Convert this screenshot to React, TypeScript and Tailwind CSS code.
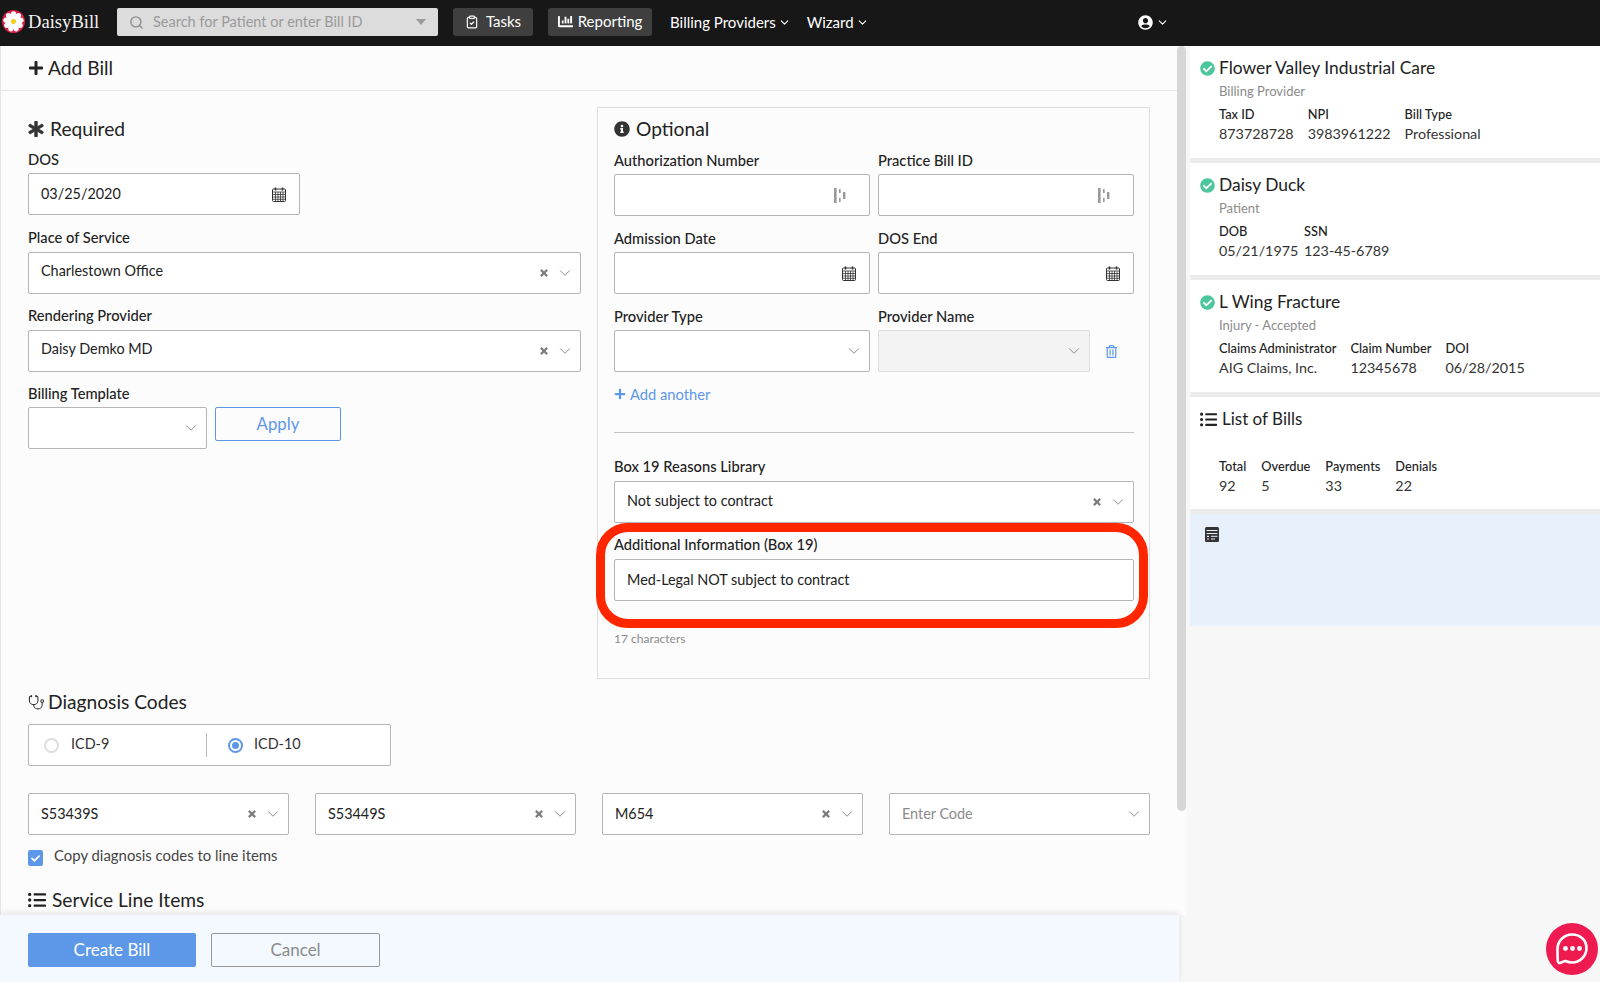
import React from "react";
import { ChevronDown, ClipboardCheck, Search, Stethoscope } from "lucide-react";
import {
  FaAsterisk,
  FaChartBar,
  FaCheck,
  FaCheckCircle,
  FaInfoCircle,
  FaListUl,
  FaPlus,
  FaRegTrashAlt,
  FaTimes,
  FaUserCircle,
} from "react-icons/fa";

function DaisyLogo() {
  const petals = [0, 40, 80, 120, 160, 200, 240, 280, 320];
  return (
    <svg width="23" height="23" viewBox="0 0 24 24" className="shrink-0">
      <circle cx="12" cy="12" r="12" fill="#d81f45" />
      {petals.map((a) => (
        <ellipse key={a} cx="12" cy="5.6" rx="3" ry="4.4" fill="#fff" transform={`rotate(${a} 12 12)`} />
      ))}
      <circle cx="12" cy="12" r="2.6" fill="#f7d117" />
    </svg>
  );
}

function CalendarIcon() {
  return (
    <svg width="14" height="15" viewBox="0 0 14 15" className="shrink-0" fill="none" stroke="#333">
      <rect x="0.5" y="2" width="13" height="12.5" rx="1" />
      <path d="M0.5 5h13M0.5 7.5h13M0.5 10h13M0.5 12.3h13M3.5 5v9.5M6 5v9.5M8.5 5v9.5M11 5v9.5" strokeWidth="0.8" />
      <path d="M3.5 0.5v3M10.5 0.5v3" strokeWidth="1.6" />
    </svg>
  );
}

function PassIcon() {
  return (
    <svg width="12" height="15" viewBox="0 0 12 15" className="shrink-0" fill="#999">
      <rect x="0" y="0" width="2.6" height="15" />
      <rect x="5" y="1" width="1.6" height="4" />
      <rect x="5" y="10" width="1.6" height="4" />
      <rect x="9" y="4" width="2.4" height="7" />
    </svg>
  );
}

function DetailsIcon() {
  return (
    <svg width="14" height="15" viewBox="0 0 14 15" className="shrink-0">
      <rect width="14" height="15" rx="1.5" fill="#333" />
      <path d="M1.5 3.5h11M1.5 6.5h11M6 9.3h6.5M6 12h4" stroke="#e8f0fb" strokeWidth="1" />
      <path d="M2 9.3h2M2 12h2" stroke="#e8f0fb" strokeWidth="1.2" />
    </svg>
  );
}

function ChatIcon() {
  return (
    <svg width="34" height="34" viewBox="0 0 34 34" fill="none">
      <path
        d="M17 2.5C9 2.5 2.5 9 2.5 17c0 2.8.1 9 .3 12 .1 1.6 1.2 2.4 2.7 1.8 2-.8 3.6-1.8 5.2-1.8 2 .9 4 1.5 6.3 1.5 8 0 14.5-6.5 14.5-14.5S25 2.5 17 2.5Z"
        stroke="#fff"
        strokeWidth="2.6"
      />
      <circle cx="10.5" cy="16.5" r="2.4" fill="#fff" />
      <circle cx="17.5" cy="16.5" r="2.4" fill="#fff" />
      <circle cx="24.5" cy="16.5" r="2.4" fill="#fff" />
    </svg>
  );
}

function Chevron() {
  return <ChevronDown size={18} strokeWidth={1.3} className="shrink-0 text-[#8a8a8a]" />;
}

function Clear() {
  return <FaTimes size={10} stroke="currentColor" strokeWidth={30} className="shrink-0 text-[#777]" />;
}

function Box({
  children,
  disabled,
  className = "",
}: {
  children?: React.ReactNode;
  disabled?: boolean;
  className?: string;
}) {
  return (
    <div
      className={`flex h-[42px] items-center rounded-[2px] border pl-3 text-[14.4px] text-[#222] ${
        disabled ? "border-[#dcdcdc] bg-[#f3f3f3]" : "border-[#b5b5b5] bg-white"
      } ${className}`}
    >
      {children}
    </div>
  );
}

function Select({
  value,
  clearable,
  disabled,
  textClass = "",
}: {
  value?: string;
  clearable?: boolean;
  disabled?: boolean;
  textClass?: string;
}) {
  return (
    <Box disabled={disabled} className="pr-[6px]">
      <span className={`flex-1 truncate ${textClass}`}>{value}</span>
      {clearable && (
        <span className="mr-[7px]">
          <Clear />
        </span>
      )}
      <Chevron />
    </Box>
  );
}

function Label({ children }: { children: React.ReactNode }) {
  return <div className="h-5 text-[14.7px] font-medium leading-[18px] text-[#222]">{children}</div>;
}

function Field({
  label,
  children,
  className = "",
  gap = "mt-[4px]",
}: {
  label: string;
  children: React.ReactNode;
  className?: string;
  gap?: string;
}) {
  return (
    <div className={className}>
      <Label>{label}</Label>
      <div className={gap}>{children}</div>
    </div>
  );
}

function Heading({ icon, children, className = "" }: { icon: React.ReactNode; children: React.ReactNode; className?: string }) {
  return (
    <div className={`flex h-7 items-center gap-[6px] text-[19.2px] text-[#222] ${className}`}>
      {icon}
      <span>{children}</span>
    </div>
  );
}

function Stat({ label, value, width = "" }: { label: string; value: string; width?: string }) {
  return (
    <div className={width}>
      <div className="h-[19px] text-[12.8px] font-medium leading-[19px] text-[#222]">{label}</div>
      <div className="whitespace-nowrap text-[14.3px] leading-5 text-[#333]">{value}</div>
    </div>
  );
}

function InfoCard({
  title,
  sub,
  stats,
}: {
  title: string;
  sub: string;
  stats: { label: string; value: string; width?: string }[];
}) {
  return (
    <div className="h-[112px] bg-white pl-[10px] pt-[10px]">
      <div className="flex h-6 items-center gap-1">
        <FaCheckCircle size={15} className="text-[#4cc79b]" />
        <span className="text-[17.4px] text-[#222]">{title}</span>
      </div>
      <div className="ml-[19px] mt-[1px] text-[13px] leading-5 text-[#8b8b8b]">{sub}</div>
      <div className="ml-[19px] mt-[4px] flex gap-[14px]">
        {stats.map((s) => (
          <Stat key={s.label} {...s} />
        ))}
      </div>
    </div>
  );
}

function Divider() {
  return <div className="h-[5px] bg-[#ececec]" />;
}

export default function App() {
  return (
    <div className="relative flex h-[982px] w-[1600px] flex-col overflow-hidden bg-[#f7f7f7] font-['Lato',sans-serif]">
      <header className="flex h-[46px] shrink-0 items-center bg-[#171717] pb-[2px] text-[15px] text-white">
        <div className="ml-[2px] flex w-[115px] items-center gap-[3px]">
          <DaisyLogo />
          <span className="font-['Liberation_Serif',serif] text-[18.6px] text-[#f2f2f2]">DaisyBill</span>
        </div>
        <div className="flex h-7 w-[321px] items-center rounded-[2px] bg-[#dcdcdc] pl-3 pr-3 text-[#9a9a9a]">
          <Search size={15} strokeWidth={2.2} className="text-[#8c8c8c]" />
          <span className="ml-[9px] flex-1 text-[14.5px]">Search for Patient or enter Bill ID</span>
          <span className="h-0 w-0 border-x-[5px] border-t-[6px] border-x-transparent border-t-[#9a9a9a]" />
        </div>
        <button className="ml-[15px] flex h-7 w-[80px] items-center justify-center gap-[7px] rounded-[3px] bg-[#3f3f3f] pb-[1px]">
          <ClipboardCheck size={14} />
          Tasks
        </button>
        <button className="ml-[15px] flex h-7 w-[104px] items-center justify-center gap-[5px] rounded-[3px] bg-[#3f3f3f] pb-[1px]">
          <FaChartBar size={15} />
          Reporting
        </button>
        <div className="ml-[18px] flex items-center gap-[2px]">
          Billing Providers <ChevronDown size={13} />
        </div>
        <div className="ml-4 flex items-center gap-[2px]">
          Wizard <ChevronDown size={13} />
        </div>
        <div className="ml-[269px] flex items-center gap-[3px]">
          <FaUserCircle size={15} />
          <ChevronDown size={13} />
        </div>
      </header>

      <div className="flex min-h-0 flex-1">
        <div className="flex w-[1190px] shrink-0 flex-col">
          <div className="flex min-h-0 flex-1">
            <main className="w-[1177px] shrink-0 overflow-hidden border-l border-[#e6e6e6] bg-[#fcfcfc]">
              <div className="flex h-[45px] items-center gap-1 border-b border-[#e8e8e8] pl-[27px] text-[19.2px] text-[#222]">
                <FaPlus size={16} />
                Add Bill
              </div>

              <div className="pl-[27px] pr-[27px] pt-4">
                <div className="grid grid-cols-[553px_553px] gap-x-4">
                  <section className="pt-2">
                    <Heading icon={<FaAsterisk size={16} stroke="currentColor" strokeWidth={24} className="text-[#333]" />}>
                      Required
                    </Heading>
                    <Field label="DOS" className="mt-[7px]" gap="mt-[3px]">
                      <Box className="w-[272px] pr-[13px]">
                        <span className="flex-1">03/25/2020</span>
                        <CalendarIcon />
                      </Box>
                    </Field>
                    <Field label="Place of Service" className="mt-[13px]">
                      <Select value="Charlestown Office" clearable textClass="pb-[5px]" />
                    </Field>
                    <Field label="Rendering Provider" className="mt-3">
                      <Select value="Daisy Demko MD" clearable textClass="pb-[5px]" />
                    </Field>
                    <Field label="Billing Template" className="mt-3" gap="mt-[3px]">
                      <div className="flex gap-2">
                        <div className="w-[179px]">
                          <Select />
                        </div>
                        <button className="h-[34px] w-[126px] rounded-[2px] border border-[#5d97e8] text-[16.8px] text-[#5d97e8]">
                          Apply
                        </button>
                      </div>
                    </Field>
                  </section>

                  <section className="relative h-[572px] border border-[#dedede] pl-4 pr-[15px] pt-[7px]">
                    <Heading icon={<FaInfoCircle size={16} className="text-[#333]" />}>Optional</Heading>
                    <div className="mt-2 grid grid-cols-2 gap-x-2">
                      <Field label="Authorization Number" gap="mt-[3px]">
                        <Box className="justify-end pr-[23px]">
                          <PassIcon />
                        </Box>
                      </Field>
                      <Field label="Practice Bill ID" gap="mt-[3px]">
                        <Box className="justify-end pr-[23px]">
                          <PassIcon />
                        </Box>
                      </Field>
                      <Field label="Admission Date" className="mt-[13px]" gap="mt-[3px]">
                        <Box className="justify-end pr-[13px]">
                          <CalendarIcon />
                        </Box>
                      </Field>
                      <Field label="DOS End" className="mt-[13px]" gap="mt-[3px]">
                        <Box className="justify-end pr-[13px]">
                          <CalendarIcon />
                        </Box>
                      </Field>
                      <Field label="Provider Type" className="mt-[13px]" gap="mt-[3px]">
                        <Select />
                      </Field>
                      <Field label="Provider Name" className="mt-[13px]" gap="mt-[3px]">
                        <div className="flex items-center">
                          <div className="w-[212px]">
                            <Select disabled />
                          </div>
                          <FaRegTrashAlt size={13} className="ml-[15px] text-[#5d97e8]" />
                        </div>
                      </Field>
                    </div>
                    <div className="mt-[12px] flex h-5 items-center gap-1 text-[14.7px] text-[#5d97e8]">
                      <FaPlus size={12} />
                      Add another
                    </div>
                    <div className="mt-[28px] border-t border-[#c4c4c4]" />
                    <Field label="Box 19 Reasons Library" className="mt-6">
                      <Select value="Not subject to contract" clearable textClass="pb-[3px]" />
                    </Field>
                    <Field label="Additional Information (Box 19)" className="mt-[12px]">
                      <Box>Med-Legal NOT subject to contract</Box>
                    </Field>
                    <div className="mt-[30px] text-[12px] leading-4 text-[#8b8b8b]">17 characters</div>
                    {/* red annotation around the box 19 field */}
                    <div className="absolute left-[-2px] right-[1px] top-[415px] h-[105px] rounded-[32px] border-[9px] border-[#ff2600]" />
                  </section>
                </div>

                <Heading
                  icon={<Stethoscope size={17} strokeWidth={1.5} className="mr-[-3px] text-[#333]" />}
                  className="mt-[9px]"
                >
                  Diagnosis Codes
                </Heading>
                <div className="mt-2 flex h-[42px] w-[363px] items-center rounded-[2px] border border-[#b5b5b5] bg-white text-[14.4px] text-[#333]">
                  <span className="ml-[15px] h-[15px] w-[15px] rounded-full border-[2px] border-[#dcdcdc]" />
                  <span className="ml-3 w-[135px] pb-[2px]">ICD-9</span>
                  <span className="h-6 border-l border-[#bbb]" />
                  <span className="ml-[21px] flex h-[15px] w-[15px] items-center justify-center rounded-full border-[2px] border-[#5d97e8]">
                    <span className="h-[7px] w-[7px] rounded-full bg-[#5d97e8]" />
                  </span>
                  <span className="ml-[11px] pb-[2px]">ICD-10</span>
                </div>
                <div className="mt-[27px] grid grid-cols-4 gap-x-[26px]">
                  <Select value="S53439S" clearable />
                  <Select value="S53449S" clearable />
                  <Select value="M654" clearable />
                  <Select value="Enter Code" textClass="text-[#8b8b8b]" />
                </div>
                <div className="mt-[15px] flex h-[17px] items-start gap-[11px] text-[14.9px] leading-[10px] text-[#444]">
                  <span className="flex h-[16px] w-[15px] items-center justify-center rounded-[2px] bg-[#5d97e8] text-white">
                    <FaCheck size={9} />
                  </span>
                  Copy diagnosis codes to line items
                </div>
                <div className="mt-[19px] flex h-7 items-center gap-[6px] text-[19.2px] text-[#222]">
                  <FaListUl size={18} />
                  Service Line Items
                </div>
              </div>
            </main>
            <div className="w-[9px] shrink-0 bg-[#fcfcfc]">
              <div className="h-[765px] rounded-[5px] bg-[#d6d6d6]" />
            </div>
          </div>
          <footer className="z-10 flex h-[67px] w-[1179px] shrink-0 items-start gap-[15px] bg-[#f3f9ff] pl-7 pt-[18px] shadow-[0_-2px_6px_rgba(0,0,0,0.1)]">
            <button className="h-[34px] w-[168px] rounded-[2px] bg-[#5d97e8] text-[17px] text-white">Create Bill</button>
            <button className="h-[34px] w-[169px] rounded-[2px] border border-[#999] text-[17px] text-[#8b8b8b]">
              Cancel
            </button>
          </footer>
        </div>

        <aside className="flex-1">
          <InfoCard
            title="Flower Valley Industrial Care"
            sub="Billing Provider"
            stats={[
              { label: "Tax ID", value: "873728728" },
              { label: "NPI", value: "3983961222" },
              { label: "Bill Type", value: "Professional" },
            ]}
          />
          <Divider />
          <InfoCard
            title="Daisy Duck"
            sub="Patient"
            stats={[
              { label: "DOB", value: "05/21/1975", width: "w-[71px]" },
              { label: "SSN", value: "123-45-6789" },
            ]}
          />
          <Divider />
          <InfoCard
            title="L Wing Fracture"
            sub="Injury - Accepted"
            stats={[
              { label: "Claims Administrator", value: "AIG Claims, Inc." },
              { label: "Claim Number", value: "12345678" },
              { label: "DOI", value: "06/28/2015" },
            ]}
          />
          <Divider />
          <div className="h-[112px] bg-white pl-[10px] pt-[10px]">
            <div className="flex h-6 items-center gap-[5px] text-[17px] text-[#222]">
              <FaListUl size={17} />
              List of Bills
            </div>
            <div className="ml-[19px] mt-[26px] flex gap-[15px]">
              <Stat label="Total" value="92" />
              <Stat label="Overdue" value="5" />
              <Stat label="Payments" value="33" />
              <Stat label="Denials" value="22" />
            </div>
          </div>
          <Divider />
          <div className="h-[112px] bg-[#e8f0fb] pl-[15px] pt-[13px]">
            <DetailsIcon />
          </div>
        </aside>
      </div>

      <div className="absolute bottom-[7px] right-[2px] flex h-[52px] w-[52px] items-center justify-center rounded-full bg-[#ee1a50]">
        <ChatIcon />
      </div>
    </div>
  );
}
